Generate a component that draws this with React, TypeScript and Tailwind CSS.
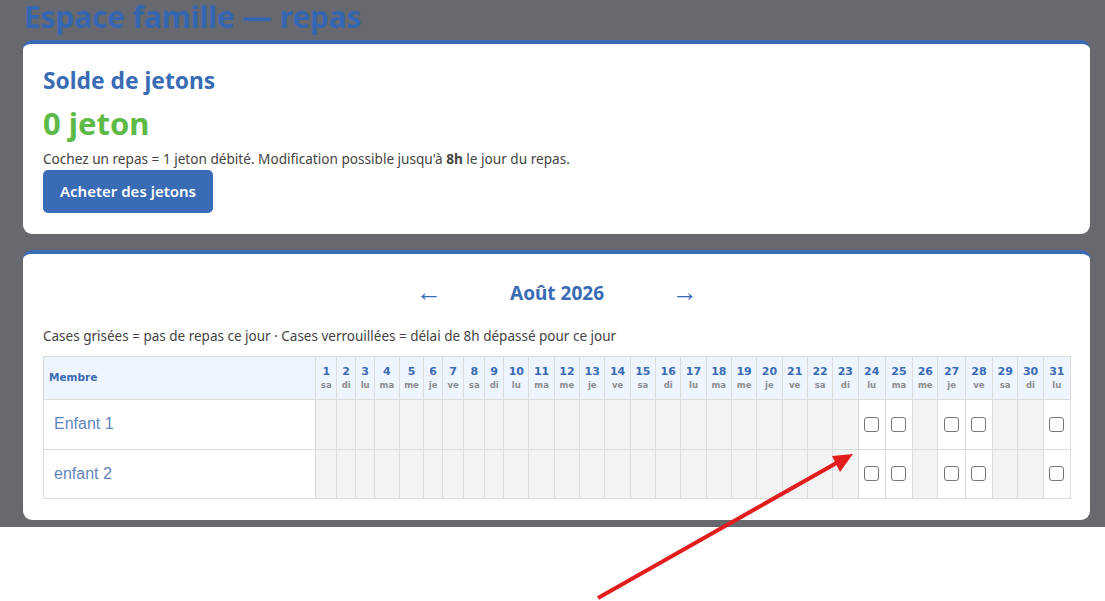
import React from "react";

type Day = { n: number; wd: string; open: boolean };

const weekdays = ["sa", "di", "lu", "ma", "me", "je", "ve"];
// days with a meal service this month
const openDays = [24, 25, 27, 28, 31];

const days: Day[] = Array.from({ length: 31 }, (_, i) => ({
  n: i + 1,
  wd: weekdays[i % 7],
  open: openDays.includes(i + 1),
}));

const members = ["Enfant 1", "enfant 2"];

function Card({ children, className = "" }: { children: React.ReactNode; className?: string }) {
  return (
    <div className={`bg-white rounded-[9px] border-t-4 border-[#3a6bb5] ${className}`}>
      {children}
    </div>
  );
}

function MealBox() {
  return (
    <input
      type="checkbox"
      readOnly
      className="appearance-none block mx-auto w-[15px] h-[15px] rounded-[3px] border-[1.5px] border-[#767676] bg-white"
    />
  );
}

export default function App() {
  return (
    <div className="relative min-h-screen bg-white font-['Noto_Sans',sans-serif] text-[#444]">
      <div className="bg-[#67696e] pl-[23px] pr-[15px] pb-[7px]">
        <h1 className="text-[30px] leading-[36px] font-bold text-[#3566b2] mt-[-1px] pl-px tracking-[-0.2px]">
          Espace famille — repas
        </h1>

        <Card className="mt-[5px] px-[20px] pt-[22px] pb-[21px]">
          <h2 className="text-[22.8px] leading-[30px] font-bold text-[#3a6bb5]">Solde de jetons</h2>
          <div className="text-[31px] leading-[40px] font-bold text-[#5dba47] mt-[7px]">0 jeton</div>
          <p className="text-[13.6px] leading-[20px] mt-[6px]">
            Cochez un repas = 1 jeton débité. Modification possible jusqu'à <b>8h</b> le jour du repas.
          </p>
          <button className="mt-[1px] h-[43px] w-[170px] rounded-[5px] bg-[#3a6bb5] text-white text-[15px] font-semibold">
            Acheter des jetons
          </button>
        </Card>

        <Card className="mt-[16px] pl-[20px] pr-[19px] pt-[24px] pb-[21px]">
          <div className="flex items-center justify-center gap-[68px] text-[#3a6bb5]">
            <button className="text-[26px] leading-[30px] -mt-[5px]">←</button>
            <span className="text-[19px] leading-[30px] font-bold">Août 2026</span>
            <button className="text-[26px] leading-[30px] -mt-[5px]">→</button>
          </div>
          <p className="text-[13.5px] leading-[20px] mt-[18px]">
            Cases grisées = pas de repas ce jour · Cases verrouillées = délai de 8h dépassé pour ce jour
          </p>
          <table className="mt-[10px] w-full border-collapse font-['DejaVu_Sans',sans-serif]">
            <thead>
              <tr className="bg-[#eef5fe] h-[43px]">
                <th className="w-full text-left pl-[5px] border border-[#dcdcdc] text-[10.5px] font-bold text-[#3a6bb5]">
                  Membre
                </th>
                {days.map((d) => (
                  <th
                    key={d.n}
                    className={`border border-[#dcdcdc] text-center ${d.open ? "px-[5.5px]" : "px-[4.5px]"}`}
                  >
                    <div className="text-[11px] leading-[15px] font-bold text-[#3a6bb5]">{d.n}</div>
                    <div className="text-[8.5px] leading-[13px] font-bold text-[#8d8d8d]">{d.wd}</div>
                  </th>
                ))}
              </tr>
            </thead>
            <tbody>
              {members.map((m) => (
                <tr key={m} className="h-[49.5px]">
                  <td className="border border-[#dcdcdc] pl-[10px] font-['Liberation_Sans',sans-serif] text-[16px] text-[#5f86bd]">
                    {m}
                  </td>
                  {days.map((d) => (
                    <td
                      key={d.n}
                      className={`border border-[#dcdcdc] ${d.open ? "bg-white px-[5.5px]" : "bg-[#f3f3f3] px-[4.5px]"}`}
                    >
                      {d.open && <MealBox />}
                    </td>
                  ))}
                </tr>
              ))}
            </tbody>
          </table>
        </Card>
      </div>

      <svg className="absolute left-0 top-0 pointer-events-none" width="1105" height="601">
        <line x1="598" y1="599" x2="840" y2="462" stroke="#e21d1d" strokeWidth="4" />
        <polygon points="853,455 832,457 840,473" fill="#e21d1d" />
      </svg>
    </div>
  );
}
